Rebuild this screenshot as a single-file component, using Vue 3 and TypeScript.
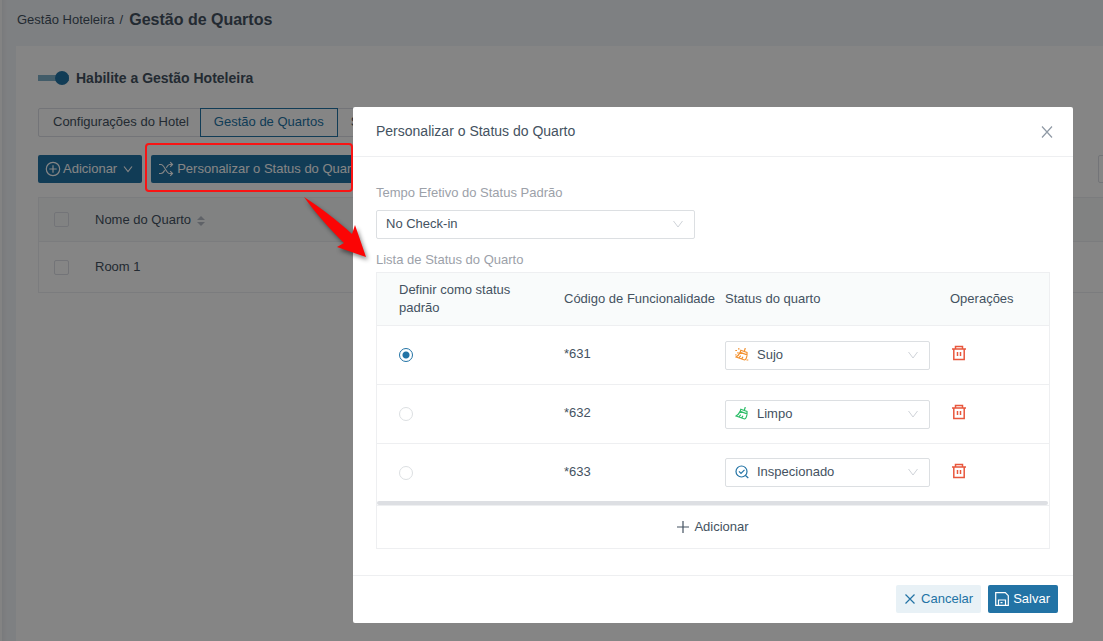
<script setup lang="ts">
import { ref } from 'vue'

type StatusKind = 'dirty' | 'clean' | 'inspected'

interface StatusRow {
  code: string
  status: StatusKind
}

const labels: Record<StatusKind, string> = {
  dirty: 'Sujo',
  clean: 'Limpo',
  inspected: 'Inspecionado',
}
const kinds: StatusKind[] = ['dirty', 'clean', 'inspected']

const enabled = ref(true)
const defaultCode = ref('*631')
const rows = ref<StatusRow[]>([
  { code: '*631', status: 'dirty' },
  { code: '*632', status: 'clean' },
  { code: '*633', status: 'inspected' },
])

function addRow() {
  rows.value.push({ code: `*${631 + rows.value.length}`, status: 'dirty' })
}
function removeRow(index: number) {
  rows.value.splice(index, 1)
}
</script>

<template>
  <div class="page">
    <div class="content">
      <nav class="crumbs">
        <a href="#">Gestão Hoteleira</a>
        <span class="slash">/</span>
        <h1>Gestão de Quartos</h1>
      </nav>
      <main class="card">
        <label class="enable">
          <input v-model="enabled" class="switch" type="checkbox" role="switch" />
          <span>Habilite a Gestão Hoteleira</span>
        </label>
        <div class="tabs">
          <button type="button" class="tab">Configurações do Hotel</button>
          <button type="button" class="tab active">Gestão de Quartos</button>
          <button type="button" class="tab">S</button>
        </div>
        <div class="toolbar">
          <button type="button" class="btn primary add">
            <svg width="16" height="16" viewBox="0 0 16 16"><circle cx="8" cy="8" r="6.7" /><path d="M8 4.3v7.4M4.3 8h7.4" /></svg>
            Adicionar
            <svg class="caret" width="10" height="10" viewBox="0 0 10 10"><path d="M1 2.500l4 5 4-5" /></svg>
          </button>
          <button type="button" class="btn primary shuffle">
            <svg width="16" height="16" viewBox="0 0 16 16">
              <path d="M1 3.500h2c3.500 0 5 9 8.500 9H14.500M1 12.500h2c1.700 0 2.800-1.500 3.700-3.200M8.300 6.700c.9-1.700 1.700-3.200 3.200-3.200h3M12.200 1.200l2.300 2.300-2.300 2.300M12.200 10.200l2.300 2.300-2.300 2.300" />
            </svg>
            Personalizar o Status do Quarto
          </button>
          <input class="search" type="text" aria-label="Nome do Quarto" />
        </div>
        <table class="rooms">
          <thead>
            <tr>
              <th class="pick"><input class="check" type="checkbox" aria-label="Nome do Quarto" /></th>
              <th>
                Nome do Quarto
                <svg class="sort" width="8" height="12" viewBox="0 0 8 12"><path d="M4 1l4 4H0zM4 11l4-4H0z" /></svg>
              </th>
            </tr>
          </thead>
          <tbody>
            <tr>
              <td class="pick"><input class="check" type="checkbox" aria-label="Room 1" /></td>
              <td>Room 1</td>
            </tr>
          </tbody>
        </table>
      </main>
    </div>

    <div class="overlay">
      <section class="dialog" role="dialog" aria-modal="true" aria-labelledby="dialog-title">
        <header class="dialog-head">
          <h2 id="dialog-title">Personalizar o Status do Quarto</h2>
          <button type="button" class="close" aria-label="Fechar">
            <svg width="12" height="12" viewBox="0 0 12 12"><path d="M1 .5l10 11M11 .5L1 11.500" /></svg>
          </button>
        </header>
        <div class="dialog-body">
          <label class="caption" for="effective">Tempo Efetivo do Status Padrão</label>
          <div class="select wide">
            <select id="effective"><option>No Check-in</option></select>
            <svg class="arrow" width="10" height="10" viewBox="0 0 10 10"><path d="M.5 2l4.500 6 4.500-6" /></svg>
          </div>
          <div class="caption list">Lista de Status do Quarto</div>
          <div class="grid">
            <table class="statuses">
              <colgroup>
                <col class="c1" /><col class="c2" /><col class="c3" /><col />
              </colgroup>
              <thead>
                <tr>
                  <th>Definir como status padrão</th>
                  <th class="nowrap">Código de Funcionalidade</th>
                  <th>Status do quarto</th>
                  <th>Operações</th>
                </tr>
              </thead>
              <tbody>
                <tr v-for="(row, i) in rows" :key="row.code">
                  <td><input v-model="defaultCode" class="radio" type="radio" name="default" :value="row.code" :aria-label="row.code" /></td>
                  <td class="code">{{ row.code }}</td>
                  <td>
                    <div class="select with-icon">
                      <svg v-if="row.status === 'inspected'" class="kind inspected" width="14" height="14" viewBox="0 0 14 14">
                        <circle cx="6.500" cy="6.500" r="5.500" /><path d="M4 6.300l2 2 3.500-3.500M10.500 10.500l2.800 2.500" />
                      </svg>
                      <svg v-else class="kind" :class="row.status" width="14" height="14" viewBox="0 0 14 14">
                        <path d="M10.300 0l-.9 3M5.800 2.300l6.200 2.200v2.300L5.200 4.400zM5.200 4.400C4 6.700 2.700 8 1 9l8.500 3c1.500-.3 2.300-2.600 2.500-5.200M4 9.900l1.700-2.200M6.700 10.900l1.300-2.200" />
                        <path v-if="row.status === 'dirty'" d="M.3 2.500H2M3 .8H4.500M2.200 4.800H3.700M.3 6.800h1.200M11.500 12h1.800" />
                      </svg>
                      <select v-model="row.status" :aria-label="'Status do quarto ' + row.code">
                        <option v-for="kind in kinds" :key="kind" :value="kind">{{ labels[kind] }}</option>
                      </select>
                      <svg class="arrow" width="10" height="10" viewBox="0 0 10 10"><path d="M.5 2l4.500 6 4.500-6" /></svg>
                    </div>
                  </td>
                  <td>
                    <button type="button" class="trash" :aria-label="'Excluir ' + row.code" @click="removeRow(i)">
                      <svg width="16" height="16" viewBox="0 0 16 16">
                        <path d="M1 4h14M4.500 4V1.500h7V4M2.800 4v10.500h10.400V4M6.500 7v4M9.500 7v4" />
                      </svg>
                    </button>
                  </td>
                </tr>
              </tbody>
            </table>
            <div class="scrollbar"></div>
            <button type="button" class="append" @click="addRow">
              <svg width="12" height="12" viewBox="0 0 12 12"><path d="M6 0v12M0 6h12" /></svg>
              Adicionar
            </button>
          </div>
        </div>
        <footer class="dialog-foot">
          <button type="button" class="btn ghost">
            <svg width="12" height="12" viewBox="0 0 12 12"><path d="M1.500 1.500l9 9M10.500 1.500l-9 9" /></svg>
            Cancelar
          </button>
          <button type="button" class="btn primary save">
            <svg width="14" height="14" viewBox="0 0 14 14"><path d="M.7.7h9.600l3 3v9.600H.7zM3.500 13V8h7v5M5.500 10.700h2" /></svg>
            Salvar
          </button>
        </footer>
      </section>
    </div>

    <div class="frame"></div>
    <svg class="pointer" width="80" height="76" viewBox="0 0 80 76">
      <path d="M6 4C22 14 40 28 54 41l3-9 11 32-29-10 7-4C33 37 18 21 6 4z" />
    </svg>
  </div>
</template>

<style>
body {
  margin: 0;
}
</style>

<style scoped>
* {
  box-sizing: border-box;
}
.page {
  position: relative;
  min-height: 100vh;
  overflow: hidden;
  background: #f2f5f9;
  font: 13px/18px "Liberation Sans", Arial, sans-serif;
  color: #445261;
}
button,
input,
select {
  font: inherit;
  color: inherit;
  margin: 0;
}
button {
  cursor: pointer;
}
svg {
  flex: none;
  fill: none;
  stroke: currentColor;
  stroke-width: 1.2;
}
.content {
  display: flex;
  flex-direction: column;
  width: calc(100% + 200px);
  min-height: 100vh;
  padding-left: 14px;
  border-left: 2px solid #fbfbfb;
  background: linear-gradient(90deg, #e8ebef, #f2f5f9 5px);
}
.crumbs {
  display: flex;
  align-items: center;
  height: 46px;
  padding: 0 0 6px 1px;
}
.crumbs a {
  color: inherit;
  text-decoration: none;
}
.slash {
  margin: 0 6px 0 5px;
}
h1 {
  margin: 0;
  font-size: 16px;
  line-height: 20px;
}
.card {
  flex: 1;
  padding: 22px;
  background: #fff;
}
.enable {
  display: flex;
  align-items: center;
  gap: 7px;
  height: 20px;
  font-size: 14px;
  font-weight: bold;
}
.switch {
  appearance: none;
  display: flex;
  align-items: center;
  width: 31px;
  height: 14px;
  background: linear-gradient(#7fb0ca, #7fb0ca) center / 100% 6px no-repeat;
  border-radius: 3px;
}
.switch::before {
  content: "";
  width: 14px;
  height: 14px;
  border-radius: 50%;
  background: #2273a5;
}
.switch:checked::before {
  margin-left: auto;
}
.tabs {
  display: flex;
  margin-top: 20px;
}
.tab {
  height: 29px;
  padding: 0 13px 2px;
  background: none;
  border: 1px solid #dcdfe6;
}
.tab + .tab {
  margin-left: -1px;
}
.tab:first-child {
  padding: 0 11px 2px 14px;
  border-radius: 2px 0 0 2px;
}
.tab.active {
  position: relative;
  border-color: #2273a5;
  color: #2273a5;
}
.toolbar {
  display: flex;
  gap: 9px;
  margin-top: 18px;
}
.btn {
  display: flex;
  align-items: center;
  gap: 4px;
  height: 28px;
  padding: 0 7px;
  border: 0;
  border-radius: 2px;
  white-space: nowrap;
}
.primary {
  background: #2273a5;
  color: #fff;
}
.add {
  gap: 2px;
  padding-right: 9px;
}
.shuffle {
  gap: 3px;
}
.caret {
  margin-left: 4px;
}
.search {
  width: 183px;
  height: 28px;
  margin-left: auto;
  border: 1px solid #dcdfe6;
  border-radius: 2px;
}
table {
  width: 100%;
  border-collapse: separate;
  border-spacing: 0;
}
th,
td {
  font-weight: normal;
  text-align: left;
}
.rooms {
  margin-top: 14px;
  border: 1px solid #ebeef2;
}
.rooms th {
  height: 44px;
  padding: 0;
  background: #f8fafa;
  border-bottom: 1px solid #ebeef2;
}
.rooms td {
  height: 50px;
  padding: 0;
}
.rooms .pick {
  width: 56px;
  padding-left: 15px;
}
.sort {
  margin-left: 2px;
  vertical-align: -3px;
  fill: #b6bcc5;
  stroke: none;
}
.check {
  appearance: none;
  display: block;
  width: 15px;
  height: 15px;
  border: 1px solid #dcdfe6;
  border-radius: 2px;
}
.overlay {
  position: absolute;
  inset: 0;
  display: flex;
  justify-content: flex-end;
  align-items: flex-start;
  padding: 107px 30px 0;
  background: rgba(0, 0, 0, 0.48);
}
.dialog {
  width: 720px;
  max-width: 100%;
  background: #fff;
  border-radius: 2px;
}
.dialog-head {
  display: flex;
  justify-content: space-between;
  align-items: center;
  height: 50px;
  padding: 0 20px 0 23px;
  border-bottom: 1px solid #eeeff1;
}
h2 {
  margin: 0;
  padding-bottom: 2px;
  font-size: 14px;
  font-weight: normal;
}
.close {
  display: flex;
  padding: 0;
  background: none;
  border: 0;
  color: #8f99a5;
}
.dialog-body {
  padding: 27px 23px 26px;
}
.caption {
  display: block;
  margin-bottom: 8px;
  color: #9ca1a9;
}
.caption.list {
  margin: 12px 0 3px;
}
.select {
  position: relative;
  height: 29px;
}
.wide {
  width: 319px;
  max-width: 100%;
}
.select select {
  appearance: none;
  width: 100%;
  height: 29px;
  padding: 0 30px 1px 9px;
  background: #fff;
  border: 1px solid #dcdfe2;
  border-radius: 2px;
}
.select.with-icon select {
  padding-left: 31px;
}
.arrow {
  position: absolute;
  right: 12px;
  top: 9px;
  stroke-width: 1;
  color: #cfd3d8;
  pointer-events: none;
}
.kind {
  position: absolute;
  left: 10px;
  top: 7px;
  pointer-events: none;
}
.dirty {
  color: #f3912f;
}
.clean {
  color: #2dbd68;
}
.inspected {
  color: #2273a5;
}
.grid {
  border: 1px solid #eeeff1;
}
.statuses {
  table-layout: fixed;
}
.c1 {
  width: 180px;
}
.c2 {
  width: 161px;
}
.c3 {
  width: 225px;
}
.statuses th,
.statuses td {
  padding: 0 13px 0 7px;
  border-bottom: 1px solid #eeeff1;
}
.statuses th:first-child,
.statuses td:first-child {
  padding-left: 22px;
}
.statuses th {
  height: 53px;
  background: #f9fbfb;
}
.statuses td {
  height: 59px;
}
.statuses .code {
  padding-bottom: 2px;
}
.statuses tr:last-child td {
  height: 57px;
  border-bottom: 0;
}
.nowrap {
  white-space: nowrap;
}
.radio {
  appearance: none;
  display: block;
  width: 14px;
  height: 14px;
  border: 1px solid #dcdfe2;
  border-radius: 50%;
}
.radio:checked {
  border-color: #2273a5;
  background: radial-gradient(circle, #2273a5 3px, #fff 4px);
}
.trash {
  display: flex;
  padding: 0 0 4px 1px;
  background: none;
  border: 0;
  color: #e8573d;
}
.trash svg {
  stroke-width: 1.5;
}
.scrollbar {
  height: 4px;
  margin: 0 1px 0 0;
  border-radius: 2px;
  background: #dddfe3;
}
.append {
  display: flex;
  justify-content: center;
  align-items: center;
  gap: 5px;
  width: 100%;
  height: 43px;
  padding: 0;
  background: none;
  border: 0;
  border-top: 1px solid #eeeff1;
}
.dialog-foot {
  display: flex;
  justify-content: flex-end;
  gap: 7px;
  padding: 9px 15px 10px;
  border-top: 1px solid #eeeff1;
}
.dialog-foot .btn {
  padding-bottom: 1px;
}
.ghost {
  gap: 5px;
  padding: 0 8px;
  background: #e8f1f6;
  color: #2273a5;
}
.save {
  padding-right: 8px;
}
.frame {
  position: absolute;
  left: 145px;
  top: 143px;
  width: 208px;
  height: 49px;
  border: 2px solid #f91414;
  border-radius: 4px;
}
.pointer {
  position: absolute;
  left: 298px;
  top: 193px;
  filter: drop-shadow(2px 3px 2px rgba(0, 0, 0, 0.45));
}
.pointer path {
  fill: #fb0505;
  stroke: none;
}
</style>
